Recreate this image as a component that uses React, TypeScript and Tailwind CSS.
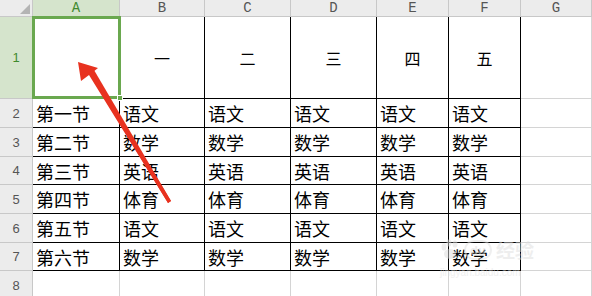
import React from 'react';

const cols = ['A', 'B', 'C', 'D', 'E', 'F', 'G'];

const rows: string[][] = [
  ['', '一', '二', '三', '四', '五', ''],
  ['第一节', '语文', '语文', '语文', '语文', '语文', ''],
  ['第二节', '数学', '数学', '数学', '数学', '数学', ''],
  ['第三节', '英语', '英语', '英语', '英语', '英语', ''],
  ['第四节', '体育', '体育', '体育', '体育', '体育', ''],
  ['第五节', '语文', '语文', '语文', '语文', '语文', ''],
  ['第六节', '数学', '数学', '数学', '数学', '数学', ''],
  ['', '', '', '', '', '', ''],
];

const cjk = { fontFamily: '"Noto Sans CJK SC", "Noto Sans", sans-serif' };

function Cell({ text, r, c }: { text: string; r: number; c: number }) {
  const inTable = r < 7 && c < 6;
  const border = inTable ? 'border-black' : 'border-[#d4d4d4]';
  if (r === 0) {
    return (
      <div className={`flex items-center justify-center border-r border-b ${border} bg-white text-[16px] leading-none text-black`} style={cjk}>
        {text}
      </div>
    );
  }
  return (
    <div className={`flex items-center border-r border-b ${border} bg-white pl-[3px] text-[18px] leading-none text-black`} style={cjk}>
      {text}
    </div>
  );
}

function Arrow() {
  return (
    <svg className="pointer-events-none absolute left-0 top-0" width="592" height="296" viewBox="0 0 592 296">
      <polygon points="78,62 81,81 89,75 168,203 171,201 93,72 98,68" fill="#e8321f" />
      <polygon points="89,73 94,70 171,201 168,203" fill="#e8321f" />
    </svg>
  );
}

// faint site stamp in the lower right corner
function Watermark() {
  return (
    <div className="pointer-events-none absolute left-[440px] top-[236px] flex flex-col items-start opacity-50">
      <div className="flex items-center gap-1">
        <svg width="20" height="22" viewBox="0 0 20 22">
          <g fill="#dcdcdc">
            <ellipse cx="4" cy="8" rx="2.5" ry="3.5" />
            <ellipse cx="9" cy="4" rx="2.5" ry="3.5" />
            <ellipse cx="15" cy="5" rx="2.5" ry="3.5" />
            <ellipse cx="10" cy="15" rx="6" ry="5" />
          </g>
        </svg>
        <div className="flex h-[20px] w-[28px] items-center justify-center rounded-full border-2 border-[#e0e0e0] text-[13px] font-bold text-[#dcdcdc]" style={{ fontFamily: '"Liberation Sans", sans-serif' }}>
          du
        </div>
        <span className="text-[19px] font-bold text-[#dedede]" style={cjk}>经验</span>
      </div>
      <span className="text-[10px] text-[#e2e2e2]" style={{ fontFamily: '"Liberation Sans", sans-serif' }}>jingyan.baidu.com</span>
    </div>
  );
}

export default function App() {
  return (
    <div className="relative h-[296px] w-[592px] overflow-hidden bg-white">
      <div className="grid grid-cols-[33px_87px_85px_86px_86px_72px_72px_1fr] grid-rows-[17px_82px_29px_29px_28px_29px_29px_28px_29px]">
        {/* corner */}
        <div className="relative border-r border-b border-[#c8c8c8] bg-[#ececec]">
          <div className="absolute bottom-[2px] right-[2px] h-0 w-0 border-b-[10px] border-l-[10px] border-b-[#b4b4b4] border-l-transparent" />
        </div>
        {cols.map((c) => (
          <div
            key={c}
            className={`flex items-center justify-center border-r border-b text-[14px] leading-none ${
              c === 'A' ? 'border-[#c8c8c8] bg-[#d5e4cc] text-[#3f8a2e]' : 'border-[#c8c8c8] bg-[#ececec] text-[#555]'
            }`}
            style={{ fontFamily: '"Liberation Mono", monospace' }}
          >
            {c}
          </div>
        ))}
        {rows.map((row, r) => (
          <React.Fragment key={r}>
            <div
              className={`flex items-center justify-center border-r border-b border-[#c8c8c8] text-[13px] leading-none ${
                r === 0 ? 'bg-[#d5e4cc] text-[#3f8a2e]' : 'bg-[#ececec] text-[#555]'
              }`}
              style={{ fontFamily: '"Liberation Sans", sans-serif' }}
            >
              {r + 1}
            </div>
            {row.map((text, c) => (
              <Cell key={c} text={text} r={r} c={c} />
            ))}
          </React.Fragment>
        ))}
      </div>

      {/* active cell A1 */}
      <div className="pointer-events-none absolute left-[32px] top-[16px] h-[83px] w-[89px] border-[3px] border-[#6aa84f]" />
      <div className="pointer-events-none absolute left-[117px] top-[95px] h-[6px] w-[6px] border border-white bg-[#6aa84f]" />

      <Watermark />
      <Arrow />
    </div>
  );
}
